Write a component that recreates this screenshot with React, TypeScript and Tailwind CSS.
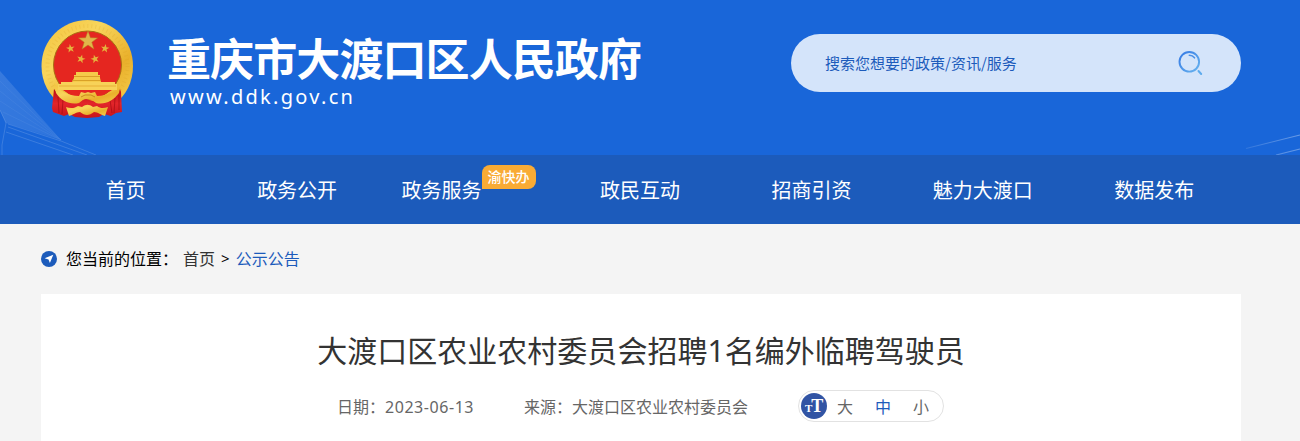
const starPoints = "0,-10 2.4,-3.2 9.5,-3.1 3.8,1.2 5.9,8.1 0,4 -5.9,8.1 -3.8,1.2 -9.5,-3.1 -2.4,-3.2";

const smallStars = [
  { x: 29.5, y: 28.5, r: -10 },
  { x: 64, y: 28.5, r: 10 },
  { x: 40, y: 39, r: 15 },
  { x: 54, y: 39, r: -15 },
];

function Emblem() {
  return (
    <svg className="block h-[98px] w-[93px]" viewBox="0 0 93 98" aria-hidden="true">
      <defs>
        <linearGradient id="gold" x1="0" y1="0" x2="1" y2="1">
          <stop offset="0" stopColor="#f3c33a" />
          <stop offset="0.35" stopColor="#f8d55c" />
          <stop offset="0.7" stopColor="#e9b02b" />
          <stop offset="1" stopColor="#f6cf4f" />
        </linearGradient>
        <linearGradient id="cloth" x1="0" y1="0" x2="0" y2="1">
          <stop offset="0" stopColor="#b90d14" />
          <stop offset="0.5" stopColor="#e3252a" />
          <stop offset="1" stopColor="#c6141a" />
        </linearGradient>
      </defs>
      <path d="M46.500 0C72 0 92 20 92 46c0 16-7 30-19 38H20C8 76 .5 62 .5 46 .5 20 21 0 46.500 0z" fill="url(#gold)" />
      <circle cx="46.500" cy="46" r="40" fill="none" stroke="#d79a1c" strokeWidth="4" strokeDasharray="1 3" opacity=".2" />
      <circle cx="46.500" cy="45" r="34" fill="#e52620" stroke="#a96d12" strokeWidth="1" />
      <path d="M13 69l8 10 10 4 14-4 14 4 10-5 10-9 1 3 1 20-6 1-5 3-7-2-5 3-12 1-12-1-6-3-5 2-11-4-1-4z" fill="url(#cloth)" />
      <path d="M17 77l1 16M22 80l-1 14M74 78l-1 15M69 80l2 13M78 75v15" stroke="#9d0a10" strokeWidth="1" opacity=".6" />
      <path d="M22 70h49l-10 6-8 2-4-4h-6l-4 4-8-2z" fill="#e52620" />
      <path d="M13 63c6 8 14 13 25 13l2-4 4 1 3-1 3 1 4-1 2 4c11 0 19-5 24-13l-2 10c-6 8-14 12-23 10l-5-4h-7l-5 4c-9 2-18-2-23-10z" fill="url(#gold)" />
      <path d="M40 77l4-2h6l4 2" fill="none" stroke="#c98b1c" strokeWidth="1" />
      <path d="M25 87c5 2 9 1 12-1l4 1c4-3 7-3 11 0l4-1c4 3 7 2 11 1l-3 9c-4-1-7-4-11-4-5 4-9 4-14 0-4 0-7 3-11 4z" fill="url(#gold)" />
      <polygon points={starPoints} fill="#e1b64a" stroke="#b98121" strokeWidth=".5" transform="translate(47 21)" />
      <path d="M47 11v10l9-3-9 3 6 8-6-8-6 8 6-8-9-3 9 3z" fill="#b17b20" opacity=".7" />
      {smallStars.map((s) => (
        <polygon key={s.x} points={starPoints} fill="#e5b33d" transform={`translate(${s.x} ${s.y}) rotate(${s.r}) scale(.45)`} />
      ))}
      <path d="M35 52h22v3h2v3l1 4H31l2-4v-3h2z" fill="#f5cb4a" />
      <path d="M33 56.500h26M31 60.500h29" stroke="#d2951e" strokeWidth=".8" />
      <path d="M20 62h54v2h2v6H17v-6h3z" fill="#f7d258" />
      <path d="M18 66h57" stroke="#dfa529" strokeWidth=".7" />
    </svg>
  );
}

function LeftPattern() {
  return (
    <svg className="absolute bottom-0 left-0 h-[88px] w-[100px]" viewBox="0 0 100 88" fill="none" aria-hidden="true">
      <defs>
        <linearGradient id="roof" x1="0" y1="0" x2="1" y2="1">
          <stop offset="0" stopColor="#fff" stopOpacity=".13" />
          <stop offset="1" stopColor="#fff" stopOpacity=".09" />
        </linearGradient>
      </defs>
      <path d="M0 4l61 69L6 56 0 43z" fill="url(#roof)" />
      <path d="M0 14l61 59M0 24l61 49M0 34l61 39M3 45l58 28" stroke="#fff" strokeOpacity=".05" />
      <path d="M0 43l6 13-4 22v10M8 57l53 17 35 14M8 60l79 28M6 65l67 23" stroke="#fff" strokeOpacity=".15" />
    </svg>
  );
}

const navItems = [
  { label: "首页" },
  { label: "政务公开" },
  { label: "政务服务", badge: "渝快办" },
  { label: "政民互动" },
  { label: "招商引资" },
  { label: "魅力大渡口" },
  { label: "数据发布" },
];

function Header() {
  return (
    <header className="relative h-[155px] bg-[#1966d9]">
      <LeftPattern />
      <svg className="absolute right-0 bottom-0 h-[22px] w-[56px]" viewBox="0 0 56 22" fill="none" aria-hidden="true">
        <defs>
          <linearGradient id="ray" x1="0" y1="0" x2="56" y2="0" gradientUnits="userSpaceOnUse">
            <stop offset="0" stopColor="#fff" stopOpacity=".1" />
            <stop offset="1" stopColor="#fff" stopOpacity=".35" />
          </linearGradient>
        </defs>
        <path d="M2 15.500L56 2M32 22l24-6" stroke="url(#ray)" strokeWidth="1.200" />
      </svg>
      <div className="relative ml-[41px] flex w-[1200px] items-start justify-between">
        <a href="#" className="flex pt-5 text-white">
          <Emblem />
          <div className="ml-[33px] pt-[15px]">
            <h1 className="text-[44px] leading-[44px] font-bold tracking-[-0.9px] whitespace-nowrap">重庆市大渡口区人民政府</h1>
            <p className="mt-[6px] ml-[3px] font-['Noto_Sans'] text-[20px] leading-6 tracking-[2.3px]">www.ddk.gov.cn</p>
          </div>
        </a>
        <form className="mt-[34px] flex h-[58px] w-[450px] items-center justify-between rounded-full bg-[#d4e4fa] pr-[38px] pl-[34px]">
          <span className="text-[15px] text-[#1c5bbb]">搜索您想要的政策/资讯/服务</span>
          <svg className="h-[26px] w-[26px]" viewBox="0 0 26 26" fill="none" strokeLinecap="round" aria-hidden="true">
            <defs>
              <linearGradient id="lens" x1="0" y1="0" x2="1" y2="1">
                <stop offset="0" stopColor="#3479e4" />
                <stop offset="1" stopColor="#67b3ef" />
              </linearGradient>
            </defs>
            <circle cx="12.300" cy="11.800" r="9.800" stroke="url(#lens)" strokeWidth="1.900" />
            <path d="M12.300 5.300c2.200 0 3.900.8 5.200 2.500" stroke="#4c91e7" strokeWidth="1.600" />
            <path d="M21.500 21l2.700 3" stroke="#5eabed" strokeWidth="2" />
          </svg>
        </form>
      </div>
    </header>
  );
}

function Nav() {
  return (
    <nav className="h-[69px] bg-[#1c5bbb]">
      <ul className="ml-[40px] grid h-full w-[1200px] grid-cols-7 text-[20px] text-white">
        {navItems.map((item) => (
          <li key={item.label} className="flex justify-center leading-[69px] whitespace-nowrap">
            <a href="#">{item.label}</a>
            {item.badge && (
              <span className="mt-[10px] h-6 w-[54px] rounded-lg rounded-bl-none bg-[#f9ab35] text-center text-[14px] leading-[23px] font-medium">
                {item.badge}
              </span>
            )}
          </li>
        ))}
      </ul>
    </nav>
  );
}

function Breadcrumb() {
  return (
    <div className="flex h-[70px] items-center text-[16px] whitespace-nowrap">
      <svg className="mr-[9px] h-4 w-4" viewBox="0 0 16 16" aria-hidden="true">
        <circle cx="8" cy="8" r="8" fill="#1c5bbb" />
        <path d="M12.300 3.700L8.900 12 7.500 8.500 3.600 7.200z" fill="#fff" />
      </svg>
      <div className="flex items-center pb-[2px]">
        <span className="text-black">您当前的位置：</span>
        <a href="#" className="ml-[5px] text-[#333]">首页</a>
        <span className="mx-[6px] pt-px font-['Noto_Sans'] text-[15px] text-black">&gt;</span>
        <a href="#" className="text-[#1c5bbb]">公示公告</a>
      </div>
    </div>
  );
}

function FontSizeSwitch() {
  return (
    <div className="ml-[50px] flex h-8 w-[146px] items-center rounded-full border border-[#e2e2e2] pl-[2px]">
      <span className="flex h-[26px] w-[26px] items-baseline justify-center rounded-full bg-[#3154a4] font-['Liberation_Serif'] leading-[26px] font-bold text-white">
        <span className="text-[11px]">T</span>
        <span className="-ml-px text-[18px]">T</span>
      </span>
      <button className="ml-[10px]">大</button>
      <button className="ml-[22px] text-[#1c5bbb]">中</button>
      <button className="ml-[22px]">小</button>
    </div>
  );
}

export default function App() {
  return (
    <div className="h-[441px] overflow-hidden bg-[#f4f4f4] font-['Noto_Sans_CJK_SC',sans-serif]">
      <Header />
      <Nav />
      <main className="ml-[41px] w-[1200px]">
        <Breadcrumb />
        <article className="h-[147px] bg-white pt-[33px]">
          <h2 className="text-center text-[30px] leading-[44px] tracking-[0.02px] text-[#333]">大渡口区农业农村委员会招聘<span className="font-['Noto_Sans']">1</span>名编外临聘驾驶员</h2>
          <div className="mt-[17px] ml-[296px] flex items-center text-[16px] whitespace-nowrap text-[#666]">
            <span>日期：<span className="font-['Noto_Sans'] tracking-[0.55px]">2023-06-13</span></span>
            <span className="ml-[50px]">来源：大渡口区农业农村委员会</span>
            <FontSizeSwitch />
          </div>
        </article>
      </main>
    </div>
  );
}
